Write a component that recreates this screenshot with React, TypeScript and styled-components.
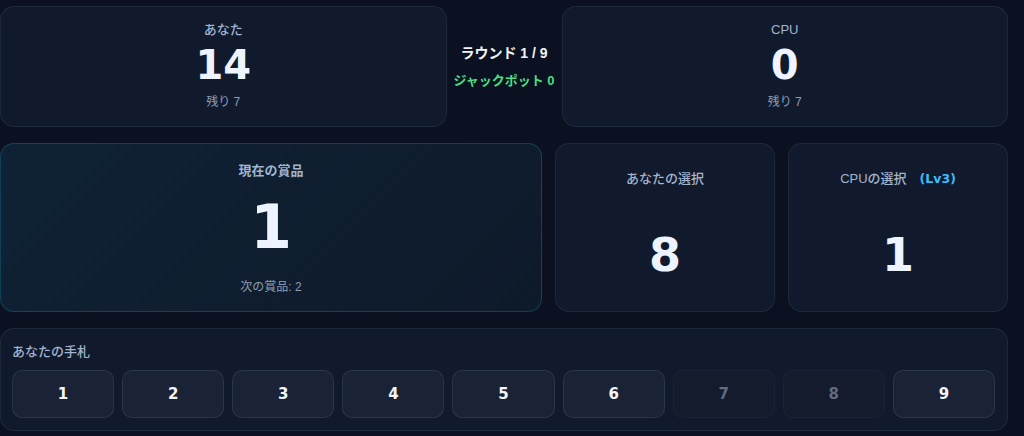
import React from 'react';
import styled, { createGlobalStyle } from 'styled-components';

const GlobalStyle = createGlobalStyle`
  html, body {
    margin: 0;
    padding: 0;
    background: #0b1120;
  }
  body {
    font-family: "DejaVu Sans", "Noto Sans CJK JP", sans-serif;
    color: #e2e8f0;
  }
`;

const Board = styled.div`
  width: 1008px;
  padding-top: 6px;
  display: flex;
  flex-direction: column;
  gap: 16px;
`;

const ScoreRow = styled.div`
  display: grid;
  grid-template-columns: 1fr 87px 1fr;
  gap: 14px;
  align-items: center;
`;

const Card = styled.div`
  background: #111a2d;
  border: 1px solid rgba(148, 163, 184, 0.1);
  border-radius: 14px;
  display: flex;
  flex-direction: column;
  align-items: center;
`;

const ScoreCard = styled(Card)`
  height: 121px;
  box-sizing: border-box;
  padding-top: 14px;
`;

const Label = styled.div<{ $bold?: boolean }>`
  font-family: "Liberation Sans", "Noto Sans CJK JP", sans-serif;
  font-size: 13px;
  line-height: 18px;
  color: #a3b4cd;
  font-weight: ${p => (p.$bold ? 700 : 500)};
`;

const BigNumber = styled.div<{ $size: number; $gap: number }>`
  font-size: ${p => p.$size}px;
  line-height: 1;
  font-weight: 700;
  color: #eef4ff;
  margin-top: ${p => p.$gap}px;
`;

const SubText = styled.div<{ $gap: number }>`
  font-family: "Liberation Sans", "Noto Sans CJK JP", sans-serif;
  font-size: 12px;
  line-height: 16px;
  color: #8e9db3;
  margin-top: ${p => p.$gap}px;
`;

const RoundInfo = styled.div`
  display: flex;
  flex-direction: column;
  align-items: center;
  gap: 10px;
  white-space: nowrap;
  font-family: "Liberation Sans", "Noto Sans CJK JP", sans-serif;
  font-weight: 700;
`;

const RoundText = styled.div`
  font-size: 14px;
  line-height: 18px;
  color: #f1f5f9;
`;

const Jackpot = styled.div`
  font-size: 13px;
  line-height: 18px;
  color: #4ade80;
`;

const PlayRow = styled.div`
  display: grid;
  grid-template-columns: 2.464fr 1fr 1fr;
  gap: 13px;
`;

const PrizeCard = styled(Card)`
  background: linear-gradient(135deg, #0f2235 0%, #0e1a2a 100%);
  border-color: rgba(22, 120, 150, 0.4);
  padding: 18px 0 16px;
`;

const ChoiceCard = styled(Card)`
  padding-top: 26px;
`;

const Level = styled.span`
  font-family: "DejaVu Sans", sans-serif;
  font-size: 12.5px;
  font-weight: 700;
  color: #38bdf8;
  margin-left: 13px;
`;

const HandPanel = styled.div`
  background: #111a2d;
  border: 1px solid rgba(148, 163, 184, 0.1);
  border-radius: 14px;
  padding: 14px 12px 12px 11px;
`;

const HandLabel = styled(Label)`
  margin-bottom: 9px;
`;

const HandGrid = styled.div`
  display: grid;
  grid-template-columns: repeat(9, 1fr);
  gap: 8px;
`;

const HandCard = styled.button<{ $used: boolean }>`
  height: 48px;
  border-radius: 10px;
  font-family: "DejaVu Sans", sans-serif;
  font-size: 15px;
  font-weight: 700;
  border: 1px solid ${p => (p.$used ? 'rgba(148, 163, 184, 0.06)' : 'rgba(148, 163, 184, 0.14)')};
  background: ${p => (p.$used ? '#131b2d' : '#1a2336')};
  color: ${p => (p.$used ? '#5f6b7e' : '#f1f5f9')};
  cursor: ${p => (p.$used ? 'default' : 'pointer')};
`;

const hand = [1, 2, 3, 4, 5, 6, 7, 8, 9];
const used = [7, 8];

export default function App() {
  return (
    <>
      <GlobalStyle />
      <Board>
        <ScoreRow>
          <ScoreCard>
            <Label>あなた</Label>
            <BigNumber $size={40} $gap={6}>14</BigNumber>
            <SubText $gap={9}>残り 7</SubText>
          </ScoreCard>
          <RoundInfo>
            <RoundText>ラウンド 1 / 9</RoundText>
            <Jackpot>ジャックポット 0</Jackpot>
          </RoundInfo>
          <ScoreCard>
            <Label>CPU</Label>
            <BigNumber $size={40} $gap={6}>0</BigNumber>
            <SubText $gap={9}>残り 7</SubText>
          </ScoreCard>
        </ScoreRow>

        <PlayRow>
          <PrizeCard>
            <Label $bold>現在の賞品</Label>
            <BigNumber $size={60} $gap={17}>1</BigNumber>
            <SubText $gap={22}>次の賞品: 2</SubText>
          </PrizeCard>
          <ChoiceCard>
            <Label>あなたの選択</Label>
            <BigNumber $size={46} $gap={44}>8</BigNumber>
          </ChoiceCard>
          <ChoiceCard>
            <Label>
              CPUの選択<Level>(Lv3)</Level>
            </Label>
            <BigNumber $size={46} $gap={44}>1</BigNumber>
          </ChoiceCard>
        </PlayRow>

        <HandPanel>
          <HandLabel>あなたの手札</HandLabel>
          <HandGrid>
            {hand.map(n => (
              <HandCard key={n} $used={used.includes(n)} disabled={used.includes(n)}>
                {n}
              </HandCard>
            ))}
          </HandGrid>
        </HandPanel>
      </Board>
    </>
  );
}
